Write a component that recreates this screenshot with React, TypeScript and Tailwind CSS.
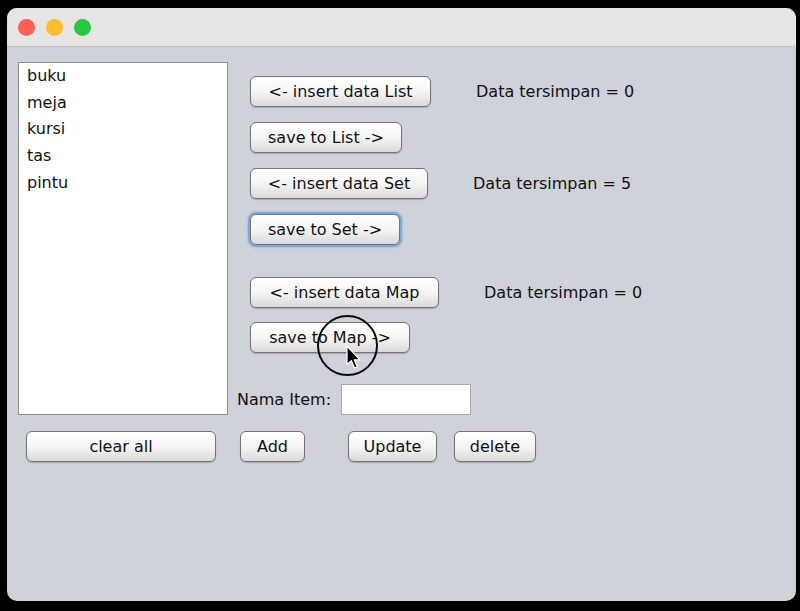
import React from "react";

const font = { fontFamily: '"DejaVu Sans", "Liberation Sans", sans-serif' };

const Btn = ({ label, w, focus }: { label: string; w: string; focus?: boolean }) => (
    <button
        className={`${w} h-[31px] shrink-0 rounded-[6px] border border-[#747474] bg-gradient-to-b from-white via-[#f5f5f5] to-[#dadada] text-[16px] text-[#111] ${focus ? "shadow-[0_0_0_2px_#7fa7d9,0_0_2px_3px_#a9c4e6]" : "shadow-[0_1px_1px_rgba(0,0,0,0.2)]"}`}
        style={font}
    >
        {label}
    </button>
);

const Row = ({ label, w, info, mt, focus }: { label: string; w: string; info?: string; mt: string; focus?: boolean }) => (
    <div className={`flex items-center ${mt}`}>
        <Btn label={label} w={w} focus={focus} />
        {info && <span className="ml-[45px] text-[16px] text-[#111]">{info}</span>}
    </div>
);

const App = () => {
    const items = ["buku", "meja", "kursi", "tas", "pintu"];
    return (
        <main className="w-[800px] h-[611px] bg-black pt-[8px] pl-[7px]" style={font}>
            <div className="relative w-[789px] h-[593px] rounded-[10px] overflow-hidden bg-[#cfd2d9] flex flex-col">
                <header className="h-[39px] shrink-0 bg-[#e5e5e5] border-b border-[#bfc1c6] flex items-center pl-[11px] gap-[11px]">
                    <span className="w-[17px] h-[17px] rounded-full bg-[#fe5f57]" />
                    <span className="w-[17px] h-[17px] rounded-full bg-[#febc2e]" />
                    <span className="w-[17px] h-[17px] rounded-full bg-[#28c840]" />
                </header>

                <section className="flex">
                    <ul className="ml-[11px] mt-[15px] w-[210px] h-[353px] bg-white border border-[#8e8e8e] pl-[8px] text-[16px] text-[#111]">
                        {items.map((item, index) => (
                            <li key={index} className="h-[26.7px] leading-[26.7px]">{item}</li>
                        ))}
                    </ul>

                    <div className="ml-[22px] flex flex-col">
                        <Row label="<- insert data List" w="w-[181px]" info="Data tersimpan = 0" mt="mt-[29px]" />
                        <Row label="save to List ->" w="w-[152px]" mt="mt-[15px]" />
                        <Row label="<- insert data Set" w="w-[178px]" info="Data tersimpan = 5" mt="mt-[15px]" />
                        <Row label="save to Set ->" w="w-[150px]" mt="mt-[15px]" focus />
                        <Row label="<- insert data Map" w="w-[189px]" info="Data tersimpan = 0" mt="mt-[32px]" />
                        <Row label="save to Map ->" w="w-[160px]" mt="mt-[14px]" />
                        <div className="flex items-center -ml-[13px] mt-[31px]">
                            <span className="text-[16px] text-[#111]">Nama Item:</span>
                            <input className="ml-[10px] w-[130px] h-[31px] bg-white border border-[#a9a9a9] outline-none" />
                        </div>
                    </div>
                </section>

                <section className="flex ml-[19px] mt-[16px]">
                    <Btn label="clear all" w="w-[190px]" />
                    <div className="ml-[24px]"><Btn label="Add" w="w-[65px]" /></div>
                    <div className="ml-[43px]"><Btn label="Update" w="w-[89px]" /></div>
                    <div className="ml-[17px]"><Btn label="delete" w="w-[82px]" /></div>
                </section>

                {/* click indicator over "save to Map" */}
                <div className="absolute left-[310px] top-[307px] w-[61px] h-[61px] rounded-full border-2 border-[#0a0a0a]" />
                <svg className="absolute left-[339px] top-[337px]" width="18" height="26" viewBox="0 0 18 26">
                    <path d="M1 1 L1 19.5 L5.3 15.6 L8.6 23 L11.3 21.9 L8.2 14.8 L14 14.8 Z" fill="#000" stroke="#fff" strokeWidth="1.2" strokeLinejoin="round" />
                </svg>
            </div>
        </main>
    );
};

export default App;
